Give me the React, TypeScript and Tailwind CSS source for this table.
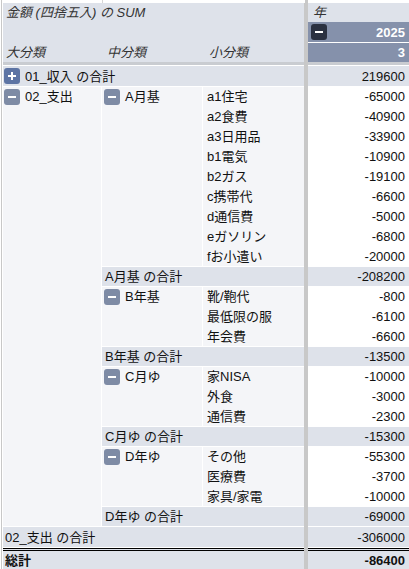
import React from 'react';

// pivot table: 金額 SUM by 大分類 / 中分類 / 小分類, one year column

const groups = [
  {
    name: 'A月基',
    total: -208200,
    items: [
      ['a1住宅', -65000],
      ['a2食費', -40900],
      ['a3日用品', -33900],
      ['b1電気', -10900],
      ['b2ガス', -19100],
      ['c携帯代', -6600],
      ['d通信費', -5000],
      ['eガソリン', -6800],
      ['fお小遣い', -20000],
    ] as [string, number][],
  },
  {
    name: 'B年基',
    total: -13500,
    items: [
      ['靴/鞄代', -800],
      ['最低限の服', -6100],
      ['年会費', -6600],
    ] as [string, number][],
  },
  {
    name: 'C月ゆ',
    total: -15300,
    items: [
      ['家NISA', -10000],
      ['外食', -3000],
      ['通信費', -2300],
    ] as [string, number][],
  },
  {
    name: 'D年ゆ',
    total: -69000,
    items: [
      ['その他', -55300],
      ['医療費', -3700],
      ['家具/家電', -10000],
    ] as [string, number][],
  },
];

const spanRows = groups.reduce((n, g) => n + g.items.length + 1, 0);

const Toggle = ({ kind }: { kind: 'plus' | 'minus' | 'dark' }) => {
  const bg = kind === 'plus' ? 'bg-[#5d74a4]' : kind === 'dark' ? 'bg-[#2b3141]' : 'bg-[#7e8ba5]';
  return (
    <span className={`relative inline-flex shrink-0 items-center justify-center w-4 h-4 rounded-[3px] ${bg}`}>
      <span className="block w-2 h-[2px] bg-white" />
      {kind === 'plus' && <span className="absolute w-[2px] h-2 bg-white" />}
    </span>
  );
};

const Divider = () => <td className="p-0 bg-[#c8c8c8]" />;

const App: React.FC = () => {
  return (
    <div className="w-[409px] h-[569px] overflow-hidden bg-white text-[13px] leading-[19px] text-[#111] font-['Liberation_Sans','Noto_Sans_CJK_JP',sans-serif]">
      {/* spreadsheet grid peeking out above the pivot */}
      <div className="flex h-[3px]">
        <div className="w-[1px] bg-[#c8c8c8] ml-[1px]" />
        <div className="w-[100px]" />
        <div className="w-[1px] bg-[#d6d6d6]" />
        <div className="w-[202px]" />
        <div className="w-[3px] bg-[#c8c8c8]" />
      </div>
      <div className="flex">
        <div className="w-[3px] shrink-0 flex">
          <div className="w-[1px] ml-[1px] bg-[#c8c8c8]" />
        </div>
        <table className="table-fixed border-separate border-spacing-0 w-[406px]">
          <colgroup>
            <col className="w-[99px]" />
            <col className="w-[101px]" />
            <col className="w-[101px]" />
            <col className="w-[4px]" />
            <col className="w-[101px]" />
          </colgroup>
          <thead className="italic text-[#333]">
            <tr>
              <td colSpan={3} className="h-[19px] p-0 pl-[3px] bg-[#dee2ea] whitespace-nowrap">
                金額 (四捨五入) の SUM
              </td>
              <Divider />
              <td className="h-[19px] p-0 pl-[5px] bg-[#dee2ea]">年</td>
            </tr>
            <tr>
              <td colSpan={3} className="h-[20px] p-0 bg-[#dee2ea]" />
              <Divider />
              <td className="h-[20px] p-0 bg-[#8591ab] not-italic">
                <div className="flex items-center justify-between pl-[3px] pr-[4px]">
                  <Toggle kind="dark" />
                  <span className="font-bold text-white">2025</span>
                </div>
              </td>
            </tr>
            <tr>
              <td className="h-[20px] p-0 pl-[3px] pt-[1px] bg-[#dee2ea] whitespace-nowrap">大分類</td>
              <td className="h-[20px] p-0 pl-[5px] pt-[1px] bg-[#dee2ea] whitespace-nowrap">中分類</td>
              <td className="h-[20px] p-0 pl-[6px] pt-[1px] bg-[#dee2ea] whitespace-nowrap">小分類</td>
              <Divider />
              <td className="h-[20px] p-0 pr-[4px] border-t border-white bg-[#8591ab] text-right not-italic font-bold text-white">
                3
              </td>
            </tr>
            <tr>
              <td colSpan={3} className="h-[3px] p-0 bg-[#c9ccd1]" />
              <Divider />
              <td className="h-[3px] p-0 bg-[#c9ccd1]" />
            </tr>
          </thead>
          <tbody>
            <tr>
              <td colSpan={3} className="h-[21px] p-0 bg-[#dee2ea] border-t border-white">
                <div className="flex items-center gap-[5px] pl-[1px] whitespace-nowrap">
                  <Toggle kind="plus" />
                  <span>01_収入 の合計</span>
                </div>
              </td>
              <Divider />
              <td className="h-[21px] p-0 pr-[4px] bg-[#dee2ea] border-t border-white text-right">219600</td>
            </tr>
            {groups.map((g, gi) => (
              <React.Fragment key={g.name}>
                {g.items.map(([name, value], i) => (
                  <tr key={name}>
                    {gi === 0 && i === 0 && (
                      <td
                        rowSpan={spanRows}
                        className="p-0 align-top bg-[#f4f5f8] border-t border-r border-white"
                      >
                        <div className="flex items-center gap-[5px] h-[19px] pl-[1px] whitespace-nowrap">
                          <Toggle kind="minus" />
                          <span>02_支出</span>
                        </div>
                      </td>
                    )}
                    {i === 0 && (
                      <td
                        rowSpan={g.items.length}
                        className="p-0 align-top bg-[#f4f5f8] border-t border-r border-white"
                      >
                        <div className="flex items-center gap-[5px] h-[19px] pl-[2px] whitespace-nowrap">
                          <Toggle kind="minus" />
                          <span>{g.name}</span>
                        </div>
                      </td>
                    )}
                    <td
                      className={`h-[20px] p-0 pl-[4px] bg-[#f4f5f8] whitespace-nowrap ${
                        i === 0 ? 'border-t border-white' : ''
                      }`}
                    >
                      {name}
                    </td>
                    <Divider />
                    <td className="h-[20px] p-0 pr-[4px] bg-white text-right">{value}</td>
                  </tr>
                ))}
                <tr>
                  <td colSpan={2} className="h-[20px] p-0 pl-[3px] bg-[#dee2ea] border-t border-white whitespace-nowrap">
                    {g.name} の合計
                  </td>
                  <Divider />
                  <td className="h-[20px] p-0 pr-[4px] bg-[#dee2ea] border-t border-white text-right">{g.total}</td>
                </tr>
              </React.Fragment>
            ))}
            <tr>
              <td colSpan={3} className="h-[22px] p-0 pl-[2px] bg-[#dee2ea] border-y border-white whitespace-nowrap">
                02_支出 の合計
              </td>
              <Divider />
              <td className="h-[22px] p-0 pr-[4px] bg-[#dee2ea] border-y border-white text-right">-306000</td>
            </tr>
            <tr className="font-bold">
              <td colSpan={3} className="h-[19px] p-0 pl-[2px] bg-[#dee2ea] border-t-[3px] border-double border-black">
                総計
              </td>
              <Divider />
              <td className="h-[19px] p-0 pr-[4px] bg-[#dee2ea] border-t-[3px] border-double border-black text-right">
                -86400
              </td>
            </tr>
          </tbody>
        </table>
      </div>
    </div>
  );
};

export default App;
